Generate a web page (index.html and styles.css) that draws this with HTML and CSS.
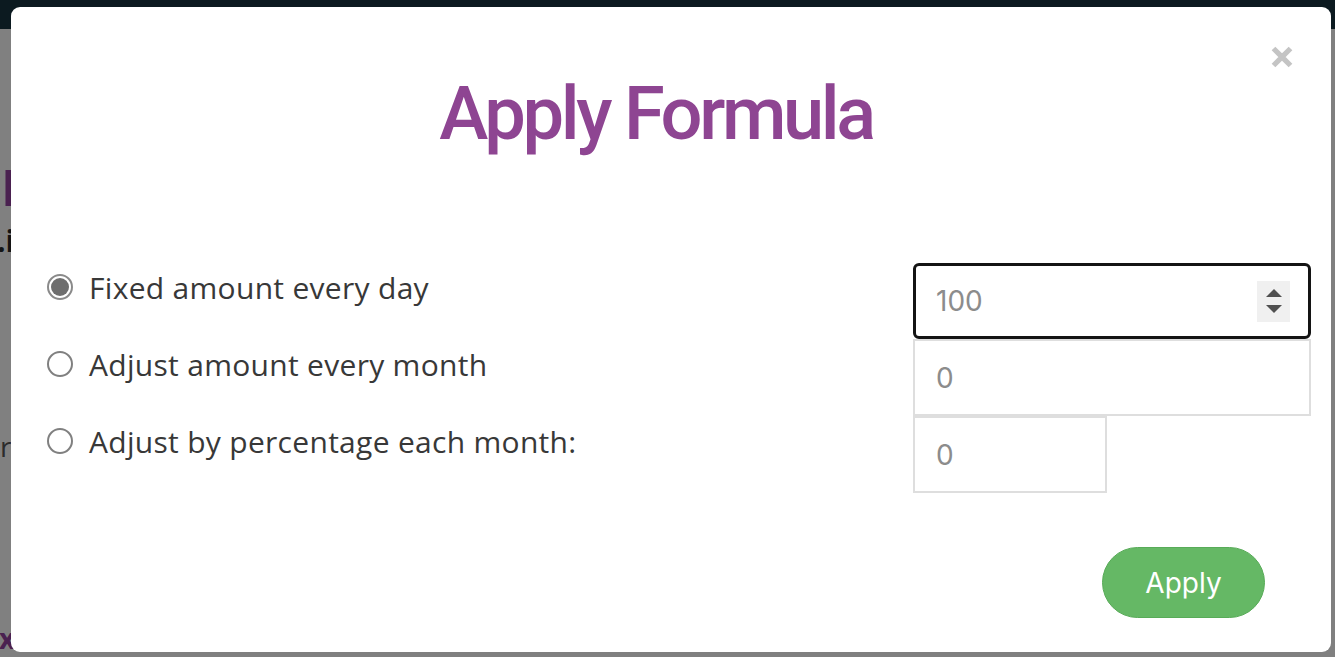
FILE: index.html
```html
<!DOCTYPE html>
<html lang="en">
<head>
<meta charset="utf-8">
<title>Apply Formula</title>
<link rel="stylesheet" href="styles.css">
</head>
<body>
<div class="topbar"></div>
<div class="page">
  <div class="bg-heading">Daily Budget</div>
  <div class="bg-line">.i</div>
  <div class="bg-text">ro</div>
  <div class="bg-link">x</div>
</div>

<div class="modal" role="dialog" aria-labelledby="modal-title">
  <button class="close" type="button" aria-label="Close">
    <svg width="24" height="24" viewBox="0 0 24 24" aria-hidden="true"><path d="M3.5 3.5 L20.5 20.5 M20.5 3.5 L3.5 20.5" stroke="#c4c4c4" stroke-width="5.2" fill="none"/></svg>
  </button>
  <div class="modal-header">
    <h1 id="modal-title" class="title">Apply Formula</h1>
  </div>
  <div class="modal-body">
    <div class="options">
      <label class="option">
        <span class="radio checked"></span>
        <span class="option-text">Fixed amount every day</span>
      </label>
      <label class="option">
        <span class="radio"></span>
        <span class="option-text">Adjust amount every month</span>
      </label>
      <label class="option">
        <span class="radio"></span>
        <span class="option-text">Adjust by percentage each month:</span>
      </label>
    </div>
    <div class="fields">
      <div class="field focused">
        <input class="field-input" type="text" value="100">
        <span class="spinner"><span class="tri-up"></span><span class="tri-down"></span></span>
      </div>
      <div class="field">
        <input class="field-input" type="text" value="0">
      </div>
      <div class="field short">
        <input class="field-input" type="text" value="0">
      </div>
    </div>
  </div>
  <div class="modal-footer">
    <button class="apply" type="button">Apply</button>
  </div>
</div>
</body>
</html>
```

FILE: styles.css
```css
* { box-sizing: border-box; }

html, body {
  margin: 0;
  padding: 0;
}

body {
  background: #808080;
  font-family: "Open Sans", "Liberation Sans", sans-serif;
  width: 1335px;
  height: 657px;
  overflow: hidden;
}

.topbar {
  height: 29px;
  background: #0c1a20;
}

.page {
  padding-left: 1px;
}

.bg-heading {
  margin-top: 133px;
  font-size: 50px;
  line-height: 50px;
  font-weight: 700;
  color: #4a2150;
  white-space: nowrap;
}

.bg-line {
  margin-top: 12px;
  font-size: 30px;
  line-height: 34px;
  font-weight: 700;
  color: #141414;
  margin-left: -4px;
}

.bg-text {
  margin-top: 170px;
  font-size: 28px;
  line-height: 36px;
  color: #2b2b2b;
  margin-left: -1px;
  letter-spacing: -1px;
}

.bg-link {
  margin-top: 156px;
  font-size: 28px;
  line-height: 36px;
  font-weight: 700;
  color: #4a2150;
  margin-left: -2px;
}

.modal {
  position: fixed;
  left: 11px;
  top: 7px;
  width: 1320px;
  height: 645px;
  background: #ffffff;
  border-radius: 9px;
  display: flex;
  flex-direction: column;
}

.close {
  position: absolute;
  top: 38px;
  right: 37px;
  width: 24px;
  height: 24px;
  padding: 0;
  border: 0;
  background: none;
  cursor: pointer;
}

.close svg { display: block; }

.modal-header {
  padding: 63px 50px 0 20px;
}

.title {
  margin: 0;
  text-align: center;
  font-family: Roboto, "Noto Sans", sans-serif;
  font-weight: 500;
  font-size: 74px;
  line-height: 88px;
  letter-spacing: -3.4px;
  color: #8e4592;
}

.modal-body {
  margin-top: 104px;
  display: flex;
  justify-content: space-between;
  padding: 0 20px 0 36px;
}

.options {
  display: flex;
  flex-direction: column;
}

.option {
  height: 77px;
  display: flex;
  align-items: flex-start;
  gap: 16px;
  padding-top: 8px;
  cursor: pointer;
}

.radio {
  flex: none;
  width: 26px;
  height: 26px;
  margin-top: 4px;
  border: 2px solid #808080;
  border-radius: 50%;
  background: #fff;
  position: relative;
}

.radio.checked {
  border-color: #8a8a8a;
}

.radio.checked::after {
  content: "";
  position: absolute;
  left: 2px;
  top: 2px;
  width: 18px;
  height: 18px;
  border-radius: 50%;
  background: #6e6e6e;
}

.option-text {
  font-size: 30px;
  line-height: 36px;
  letter-spacing: 0.3px;
  color: #383838;
  white-space: nowrap;
}

.fields {
  width: 398px;
  display: flex;
  flex-direction: column;
  align-items: flex-start;
}

.field {
  width: 398px;
  height: 77px;
  border: 2px solid #dedede;
  display: flex;
  align-items: center;
  padding-left: 21px;
  background: #fff;
}

.field.focused {
  height: 76px;
  margin-top: 1px;
  border: 3px solid #141414;
  border-radius: 6px;
  padding-left: 20px;
  padding-right: 18px;
}

.field.short {
  width: 194px;
}

.field-input {
  flex: 1;
  min-width: 0;
  border: 0;
  outline: none;
  padding: 0;
  background: transparent;
  font-family: Inter, "Noto Sans", sans-serif;
  font-size: 28px;
  color: #8c8c8c;
}

.spinner {
  flex: none;
  width: 33px;
  height: 41px;
  background: #f0f0f0;
  display: flex;
  flex-direction: column;
  align-items: center;
  justify-content: center;
  gap: 8px;
}

.tri-up,
.tri-down {
  width: 0;
  height: 0;
  border-left: 8px solid transparent;
  border-right: 8px solid transparent;
}

.tri-up { border-bottom: 8px solid #505050; }
.tri-down { border-top: 8px solid #505050; }

.modal-footer {
  margin-top: 54px;
  display: flex;
  justify-content: flex-end;
  padding-right: 66px;
}

.apply {
  width: 163px;
  height: 71px;
  border-radius: 36px;
  border: 1px solid #58ab58;
  background: #65b865;
  color: #ffffff;
  font-family: Inter, "Noto Sans", sans-serif;
  font-size: 28px;
  padding: 0;
  cursor: pointer;
}
```
